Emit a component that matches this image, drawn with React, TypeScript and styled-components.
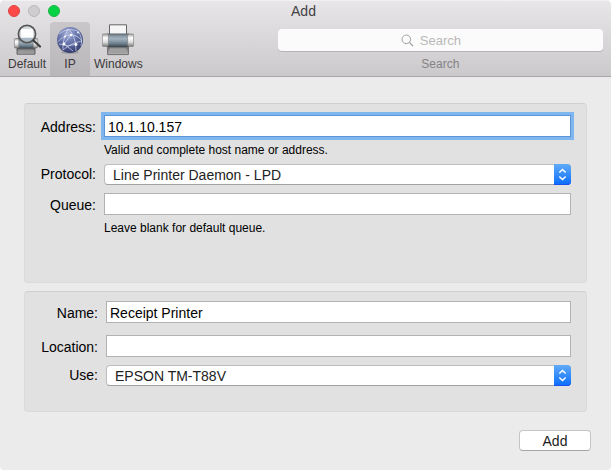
import React from "react";
import styled, { createGlobalStyle } from "styled-components";

const GlobalStyle = createGlobalStyle`
  *, *::before, *::after { box-sizing: border-box; }
  html, body, #root { height: 100%; }
  body {
    margin: 0;
    background: #ffffff;
    color: #000000;
    font-family: "Liberation Sans", Arial, sans-serif;
    font-size: 14px;
    line-height: 16px;
  }
  button, input, select { font: inherit; color: inherit; margin: 0; }
`;

const Window = styled.div`
  min-height: 100%;
  background: #ebebeb;
  border-radius: 5px 5px 4px 4px;
  overflow: hidden;
`;

const Header = styled.header`
  background: linear-gradient(#e8e6e8, #cbc9cb);
  border-bottom: 1px solid #a9a9a9;
  box-shadow: inset 0 1px 0 #f3f2f3;
`;

const TitleBar = styled.div`
  display: grid;
  grid-template-columns: 1fr auto 1fr;
  align-items: center;
  height: 22px;
  padding: 0 12px 0 8px;
`;

const Lights = styled.div`
  display: flex;
  gap: 8px;
`;

const Light = styled.button<{ $fill: string; $edge: string }>`
  width: 12px;
  height: 12px;
  padding: 0;
  border: 1px solid ${(p) => p.$edge};
  border-radius: 50%;
  background: ${(p) => p.$fill};
`;

const Title = styled.h1`
  margin: 0;
  font-size: 14px;
  font-weight: 400;
  color: #434143;
`;

const Toolbar = styled.div`
  display: flex;
  padding: 0 8px 0 4px;
`;

const ToolButton = styled.button<{ $selected?: boolean }>`
  display: flex;
  flex-direction: column;
  align-items: center;
  gap: 1px;
  min-width: 40px;
  height: 54px;
  padding: 2px 4px 0;
  border: 0;
  border-radius: 4px 4px 0 0;
  background: ${(p) => (p.$selected ? "linear-gradient(#c9c7c9, #b8b6b8)" : "transparent")};
  color: #3c3a3c;
  font-size: 12px;
  line-height: 14px;
`;

const Search = styled.label`
  display: flex;
  flex: 1;
  flex-direction: column;
  align-items: center;
  gap: 6px;
  margin-left: 131px;
  padding-top: 7px;
  color: #858385;
  font-size: 12px;
  line-height: 14px;
`;

const SearchBox = styled.span`
  position: relative;
  width: 100%;
  height: 22px;

  svg {
    position: absolute;
    top: 5px;
    left: calc(50% - 39px);
  }
`;

const SearchInput = styled.input`
  display: block;
  width: 100%;
  height: 22px;
  padding: 0 8px;
  border: 0;
  border-radius: 4px;
  outline: 0;
  background: #fbfbfb;
  box-shadow: 0 1px 0 #b5b3b5;
  font-size: 13px;
  text-align: center;

  &::placeholder { color: #b9b9b9; opacity: 1; }
`;

const Body = styled.main`
  display: flex;
  flex-direction: column;
  gap: 8px;
  padding: 26px 20px 19px 24px;
`;

const Panel = styled.section<{ $labelWidth: number; $padTop: number; $minHeight: number }>`
  display: grid;
  grid-template-columns: ${(p) => p.$labelWidth}px 1fr;
  column-gap: 8px;
  align-content: start;
  min-height: ${(p) => p.$minHeight}px;
  margin-right: 4px;
  padding: ${(p) => p.$padTop}px 15px 9px 0;
  border: 1px solid #dadada;
  border-top-color: #cfcfcf;
  border-radius: 4px;
  background: #e1e1e1;
`;

const FieldLabel = styled.label<{ $popUp?: boolean }>`
  align-self: start;
  padding-top: ${(p) => (p.$popUp ? 2 : 4)}px;
  text-align: right;
`;

const Field = styled.div<{ $gap: number }>`
  min-width: 0;
  padding-bottom: ${(p) => p.$gap}px;
`;

const TextInput = styled.input<{ $focused?: boolean }>`
  display: block;
  width: 100%;
  height: 22px;
  padding: 2px 3px 0;
  border: 1px solid ${(p) => (p.$focused ? "#5b97d6" : "#b2b2b2")};
  border-radius: 0;
  outline: 0;
  background: #ffffff;
  box-shadow: ${(p) => (p.$focused ? "0 0 0 3px #80b6ef" : "none")};
`;

const Note = styled.p`
  margin: 0;
  padding-top: 5px;
  font-size: 12px;
`;

const SelectBox = styled.div`
  position: relative;
  height: 21px;
`;

const Select = styled.select`
  display: block;
  width: 100%;
  height: 21px;
  padding: 0 24px 0 8px;
  border: 1px solid #bdbdbd;
  border-bottom-color: #a2a2a2;
  border-radius: 4px;
  outline: 0;
  appearance: none;
  background: #ffffff;
  color: #222222;
`;

const Stepper = styled.span`
  position: absolute;
  inset: 0 0 0 auto;
  display: grid;
  place-items: center;
  width: 17px;
  border-radius: 0 4px 4px 0;
  background: linear-gradient(#60abf8, #0a6cfd);
  box-shadow: inset 0 -1px 0 #1b52ee;
  pointer-events: none;
`;

const Footer = styled.footer`
  display: flex;
  justify-content: flex-end;
  padding-top: 10px;
`;

const PushButton = styled.button`
  width: 72px;
  height: 21px;
  padding: 0;
  border: 1px solid #c4c4c4;
  border-bottom-color: #a5a5a5;
  border-radius: 4px;
  background: #ffffff;
  color: #1c1c1c;
`;

function PrinterDefs({ id }: { id: string }) {
  return (
    <defs>
      <linearGradient id={`${id}-roll`} x2="0" y2="1">
        <stop offset="0" stopColor="#59636b" />
        <stop offset="0.2" stopColor="#8d9ca7" />
        <stop offset="0.4" stopColor="#a3b3bf" />
        <stop offset="0.75" stopColor="#6d7e8b" />
        <stop offset="1" stopColor="#38444d" />
      </linearGradient>
      <linearGradient id={`${id}-cap`} x2="0" y2="1">
        <stop offset="0" stopColor="#a0a0a0" />
        <stop offset="0.3" stopColor="#ffffff" />
        <stop offset="0.65" stopColor="#dedede" />
        <stop offset="1" stopColor="#777777" />
      </linearGradient>
      <linearGradient id={`${id}-tray`} x2="0" y2="1">
        <stop offset="0" stopColor="#5c5c5c" />
        <stop offset="1" stopColor="#b5b5b5" />
      </linearGradient>
    </defs>
  );
}

function PrinterIcon() {
  return (
    <svg width="32" height="32" viewBox="0 0 32 32" aria-hidden="true">
      <PrinterDefs id="win" />
      <path d="M7.5 .8h17V11h-17z" fill="#f6f6f6" stroke="#646464" strokeWidth="1" />
      <path d="M5.6 21h20.8v9.6H5.6z" fill="url(#win-tray)" stroke="#5a5a5a" strokeWidth=".8" />
      <path d="M8 24.5h16l1 5.5H7z" fill="#a9a9a9" />
      <path d="M8.5 26h15M8 28h16" stroke="#8d8d8d" strokeWidth=".6" />
      <rect x="5" y="9.5" width="22" height="13.5" fill="url(#win-roll)" />
      <rect x=".4" y="10" width="6" height="12.5" rx="1" fill="url(#win-cap)" stroke="#777" strokeWidth=".6" />
      <rect x="25.6" y="10" width="6" height="12.5" rx="1" fill="url(#win-cap)" stroke="#777" strokeWidth=".6" />
    </svg>
  );
}

function DefaultPrinterIcon() {
  return (
    <svg width="32" height="32" viewBox="0 0 32 32" aria-hidden="true">
      <PrinterDefs id="def" />
      <path d="M6 23h18v7.2H6z" fill="url(#def-tray)" stroke="#4a4a4a" strokeWidth=".8" />
      <path d="M8 26.5h14l.8 3H7.2z" fill="#999999" />
      <rect x="6" y="14" width="18" height="10.5" fill="url(#def-roll)" />
      <rect x="3.4" y="14.5" width="4.4" height="9.5" rx="1" fill="url(#def-cap)" stroke="#777" strokeWidth=".6" />
      <rect x="22.2" y="14.5" width="4.4" height="9.5" rx="1" fill="url(#def-cap)" stroke="#777" strokeWidth=".6" />
      <circle cx="16" cy="10" r="8.5" fill="#d7dadd" />
      <path d="M10 5h12v9H10z" fill="#fdfdfd" />
      <path d="M8.8 13.8h14.4l-2.6 3.4h-9.2z" fill="#a9b8c4" />
      <circle cx="16" cy="10" r="8.6" fill="none" stroke="#555555" strokeWidth="1.7" />
      <path d="m22.5 16.5 6.5 6" stroke="#3c3c3c" strokeWidth="2.2" strokeLinecap="round" />
    </svg>
  );
}

function GlobeIcon() {
  return (
    <svg width="32" height="32" viewBox="0 0 32 32" aria-hidden="true">
      <defs>
        <radialGradient id="globe" cx=".42" cy=".25" r=".8">
          <stop offset="0" stopColor="#a6b0d8" />
          <stop offset=".45" stopColor="#6875ac" />
          <stop offset="1" stopColor="#2c3465" />
        </radialGradient>
      </defs>
      <ellipse cx="16" cy="28.3" rx="9" ry="1.7" fill="#8f8d92" opacity=".6" />
      <circle cx="16" cy="16" r="13" fill="url(#globe)" />
      <path d="M5 10Q13 3 24 7Q29 14 27 22M3.5 18Q10 11 17 11T28 17M9 26Q8 17 14 5M14 5Q22 11 22 27M9 26Q17 19 28 17M5 20Q14 23 22 20.5M17 11L10 20L19 27" fill="none" stroke="#d9e0f6" strokeWidth=".8" opacity=".85" />
      <g fill="#ffffff">
        <circle cx="17" cy="11" r="1.2" />
        <circle cx="10" cy="20" r="1.4" />
        <circle cx="22" cy="20.5" r="1.4" />
        <circle cx="11" cy="12.5" r=".9" />
        <circle cx="24" cy="8.5" r=".9" />
      </g>
    </svg>
  );
}

function PopUp({ id, value }: { id: string; value: string }) {
  return (
    <SelectBox>
      <Select id={id} defaultValue={value}>
        <option>{value}</option>
      </Select>
      <Stepper>
        <svg width="9" height="13" viewBox="0 0 9 13" aria-hidden="true">
          <path d="M1.3 4.5 4.5 1.5 7.7 4.5M1.3 8.5 4.5 11.5 7.7 8.5" fill="none" stroke="#fff" strokeWidth="1.5" />
        </svg>
      </Stepper>
    </SelectBox>
  );
}

export default function App() {
  return (
    <Window>
      <GlobalStyle />
      <Header>
        <TitleBar>
          <Lights>
            <Light $fill="#fc4948" $edge="#dd4444" aria-label="Close" />
            <Light $fill="#cfcdcf" $edge="#b9b7b9" aria-label="Minimize" />
            <Light $fill="#06d344" $edge="#1bb343" aria-label="Zoom" />
          </Lights>
          <Title>Add</Title>
        </TitleBar>
        <Toolbar>
          <ToolButton>
            <DefaultPrinterIcon />
            Default
          </ToolButton>
          <ToolButton $selected aria-pressed="true">
            <GlobeIcon />
            IP
          </ToolButton>
          <ToolButton>
            <PrinterIcon />
            Windows
          </ToolButton>
          <Search>
            <SearchBox>
              <SearchInput type="text" placeholder="Search" />
              <svg width="13" height="13" viewBox="0 0 13 13" aria-hidden="true">
                <circle cx="5.3" cy="5.3" r="4.3" fill="none" stroke="#a0a0a0" />
                <path d="m8.5 8.5 3.6 3.6" stroke="#a0a0a0" strokeWidth="1.2" />
              </svg>
            </SearchBox>
            Search
          </Search>
        </Toolbar>
      </Header>
      <Body>
        <Panel $labelWidth={71} $padTop={11} $minHeight={180}>
          <FieldLabel htmlFor="address">Address:</FieldLabel>
          <Field $gap={6}>
            <TextInput id="address" $focused defaultValue="10.1.10.157" />
            <Note>Valid and complete host name or address.</Note>
          </Field>
          <FieldLabel htmlFor="protocol" $popUp>Protocol:</FieldLabel>
          <Field $gap={8}>
            <PopUp id="protocol" value="Line Printer Daemon - LPD" />
          </Field>
          <FieldLabel htmlFor="queue">Queue:</FieldLabel>
          <Field $gap={0}>
            <TextInput id="queue" />
            <Note>Leave blank for default queue.</Note>
          </Field>
        </Panel>
        <Panel $labelWidth={73} $padTop={9} $minHeight={121}>
          <FieldLabel htmlFor="name">Name:</FieldLabel>
          <Field $gap={12}>
            <TextInput id="name" defaultValue="Receipt Printer" />
          </Field>
          <FieldLabel htmlFor="location">Location:</FieldLabel>
          <Field $gap={8}>
            <TextInput id="location" />
          </Field>
          <FieldLabel htmlFor="use" $popUp>Use:</FieldLabel>
          <Field $gap={0}>
            <PopUp id="use" value="EPSON TM-T88V" />
          </Field>
        </Panel>
        <Footer>
          <PushButton type="button">Add</PushButton>
        </Footer>
      </Body>
    </Window>
  );
}
